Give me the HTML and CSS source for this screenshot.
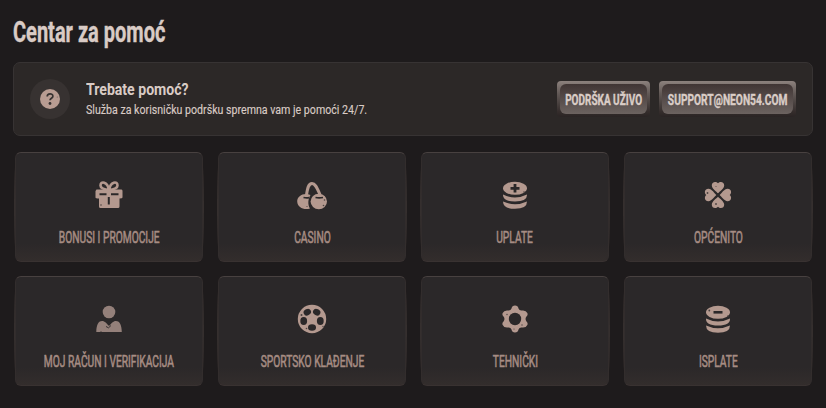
FILE: index.html
```html
<!DOCTYPE html>
<html lang="hr">
<head>
    <meta charset="UTF-8">
    <meta name="viewport" content="width=device-width, initial-scale=1.0">
    <title>Centar za pomoć</title>
    <link rel="stylesheet" href="styles.css">
</head>
<body>
    <main class="help">
        <h1><span class="narrow">Centar za pomoć</span></h1>

        <section class="contact">
            <div class="contact-icon">
                <svg width="20" height="20" viewBox="0 0 20 20">
                    <circle cx="10" cy="10" r="10" fill="#b89c92"/>
                    <path d="M7.2 7.6C7.2 3.9 12.9 4 12.9 7.2C12.9 9.2 10 9.2 10 11.3" fill="none" stroke="#373231" stroke-width="1.7"/>
                    <circle cx="10" cy="14.5" r="1.4" fill="#373231"/>
                    <circle cx="17.3" cy="8" r=".6" fill="#6f6260"/>
                </svg>
            </div>
            <div class="contact-text">
                <h2><span class="narrow">Trebate pomoć?</span></h2>
                <p><span class="narrow">Služba za korisničku podršku spremna vam je pomoći 24/7.</span></p>
            </div>
            <div class="contact-buttons">
                <button class="button button-live"><span class="button-face"><span class="narrow">PODRŠKA UŽIVO</span></span></button>
                <button class="button button-mail"><span class="button-face"><span class="narrow">SUPPORT@NEON54.COM</span></span></button>
            </div>
        </section>

        <nav class="topics">
            <a class="card">
                <svg class="icon" viewBox="0 0 32 32">
                    <path class="line" stroke-width="2.6" d="M16 11C12 10.5 7.500 9.500 7.500 6.500C7.500 1.500 14.500 2.500 16 11C17.500 2.500 24.500 1.500 24.500 6.500C24.500 9.500 20 10.500 16 11"/>
                    <path class="fill" d="M3.500 10.500H28.500Q29.500 10.500 29.500 12V18.500Q29.500 19.500 26.500 19.500V27.500Q26.500 29 25 29H7.500Q6 29 6 27.500V19.500Q2.500 19.500 2.500 18.500V12Z"/>
                    <path class="hole" stroke-width="2" d="M6.500 15.300H13.500M18 15.300H25.500M15.800 18V25.500"/>
                    <circle class="dot" cx="8" cy="26" r=".8"/>
                </svg>
                <span class="narrow">BONUSI I PROMOCIJE</span>
            </a>
            <a class="card">
                <svg class="icon" viewBox="0 0 32 32">
                    <path class="line" stroke-width="3" d="M10.500 16C11.500 9 12.500 4.500 16 4.500S21 9 24 15.500"/>
                    <path class="fill" d="M14.500 16C8 13 1 17 1.200 22.500C1.500 28.500 8 31.500 14 29.500C11.500 25.500 12 20 14.500 16Z"/>
                    <ellipse class="fill" cx="22.800" cy="22.500" rx="8.200" ry="7.700"/>
                    <path class="hole" stroke-width="1.700" d="M7.500 18.500Q10.500 19.200 13 18.700M19.500 18.500Q23 19.300 27 18.500"/>
                    <circle class="dot" cx="28.500" cy="21" r=".8"/>
                    <circle class="dot" cx="27.500" cy="26.500" r=".8"/>
                    <circle class="dot" cx="11" cy="27.500" r=".6"/>
                </svg>
                <span class="narrow">CASINO</span>
            </a>
            <a class="card">
                <svg class="icon" viewBox="0 0 32 32">
                    <ellipse class="fill" cx="16" cy="9.300" rx="12" ry="6.500"/>
                    <path class="fill" d="M4 15.500Q16 21.500 28 15.500Q28.500 22.500 16 22.500T4 15.500ZM4 22.500Q16 28 28 22.500Q28 29.800 16 29.800T4 22.500Z"/>
                    <path class="hole" stroke-width="2.800" d="M11.500 9.300H20.500M16 5V13.500"/>
                    <circle class="dot" cx="25" cy="13" r=".8"/>
                </svg>
                <span class="narrow">UPLATE</span>
            </a>
            <a class="card">
                <svg class="icon" viewBox="0 0 32 32">
                    <g class="fill">
                        <path id="leaf" d="M16 14.300C14.500 12.700 10 9.800 9.800 6.500C9.600 2.700 14 1.800 16 4.300C18 1.800 22.400 2.700 22.200 6.500C22 9.800 17.500 12.700 16 14.300Z"/>
                        <use href="#leaf" transform="rotate(90 16 16)"/>
                        <use href="#leaf" transform="rotate(180 16 16)"/>
                        <use href="#leaf" transform="rotate(270 16 16)"/>
                    </g>
                    <circle class="dot" cx="5.500" cy="14" r=".9"/>
                    <circle class="dot" cx="14" cy="25" r=".9"/>
                    <circle class="dot" cx="14" cy="7.500" r=".5"/>
                </svg>
                <span class="narrow">OPĆENITO</span>
            </a>
            <a class="card">
                <svg class="icon icon-user" viewBox="0 0 32 32">
                    <circle class="fill" cx="16" cy="9" r="6.300"/>
                    <path class="fill" d="M3.300 29C3.300 21 6 18 9 18C12 18 13.500 20.500 16 23C18.500 20.500 20 18 23 18C26 18 28.800 21 28.800 29Z"/>
                    <path class="hole" stroke-width=".9" d="M13 23.500L15.500 24.800L18 22.500"/>
                    <circle class="dot" cx="8" cy="28.500" r=".6"/>
                </svg>
                <span class="narrow">MOJ RAČUN I VERIFIKACIJA</span>
            </a>
            <a class="card">
                <svg class="icon" viewBox="0 0 32 32">
                    <circle class="fill" cx="16" cy="16" r="14.200"/>
                    <g class="spot">
                        <ellipse cx="11.300" cy="9.200" rx="3.800" ry="3.200" transform="rotate(-25 11.300 9.200)"/>
                        <ellipse cx="20.700" cy="9.200" rx="3.800" ry="3.200" transform="rotate(25 20.700 9.200)"/>
                        <ellipse cx="24.300" cy="18" rx="3.400" ry="3.900"/>
                        <ellipse cx="16" cy="24.500" rx="4" ry="3.300"/>
                        <ellipse cx="7.700" cy="18" rx="3.400" ry="3.900"/>
                    </g>
                    <circle class="dot" cx="5.500" cy="12" r="1"/>
                    <circle class="dot" cx="10.500" cy="25.500" r=".8"/>
                    <circle class="dot" cx="27" cy="23.500" r=".7"/>
                </svg>
                <span class="narrow">SPORTSKO KLAĐENJE</span>
            </a>
            <a class="card">
                <svg class="icon" viewBox="0 0 32 32">
                    <path class="gear" d="M12.500 5.500Q13 2.500 16 2.500Q19 2.500 19.500 5.500Q20.500 8 23 7.500Q27 7 28.300 10Q29.300 12 27.300 13.800Q25.800 16 27.300 18.200Q29.300 20 28.300 22Q27 25 23 24.500Q20.500 24 19.500 26.500Q19 29.500 16 29.500Q13 29.500 12.500 26.500Q11.500 24 9 24.500Q5 25 3.700 22Q2.700 20 4.700 18.200Q6.200 16 4.700 13.800Q2.700 12 3.700 10Q5 7 9 7.500Q11.500 8 12.500 5.500Z"/>
                    <circle class="spot" cx="16" cy="16" r="6.200"/>
                    <circle class="dot" cx="8" cy="11.500" r=".7"/>
                    <circle class="dot" cx="23" cy="22" r=".7"/>
                    <circle class="dot" cx="15" cy="26" r=".6"/>
                </svg>
                <span class="narrow">TEHNIČKI</span>
            </a>
            <a class="card">
                <svg class="icon" viewBox="0 0 32 32">
                    <ellipse class="fill" cx="16" cy="9.300" rx="12" ry="6.500"/>
                    <path class="fill" d="M4 15.500Q16 21.500 28 15.500Q28.500 22.500 16 22.500T4 15.500ZM4 22.500Q16 28 28 22.500Q28 29.800 16 29.800T4 22.500Z"/>
                    <path class="hole" stroke-width="2.600" d="M11.500 9.300H20.500"/>
                    <circle class="dot" cx="7.300" cy="7.500" r=".9"/>
                    <circle class="dot" cx="26" cy="13" r=".8"/>
                </svg>
                <span class="narrow">ISPLATE</span>
            </a>
        </nav>
    </main>
</body>
</html>
```
FILE: styles.css
```css
* {
    box-sizing: border-box;
}

body {
    margin: 0;
    background-color: #1e1b1c;
    font-family: 'Roboto', sans-serif;
    color: #d9cbc5;
}

.help {
    width: 826px;
    height: 408px;
    padding: 14px 13px 0;
    overflow: hidden;
}

.narrow {
    display: inline-block;
    white-space: nowrap;
}

h1 {
    height: 36px;
    margin: 0 0 12px;
    font-size: 29px;
    line-height: 36px;
    font-weight: 700;
}

h1 .narrow {
    transform: scaleX(0.69);
    transform-origin: left;
    -webkit-text-stroke: 0.4px;
}

.contact {
    display: flex;
    align-items: center;
    height: 74px;
    padding: 0 16px;
    background-color: #2c2827;
    border: 1px solid #373333;
    border-radius: 7px;
}

.contact-icon {
    display: flex;
    align-items: center;
    justify-content: center;
    width: 40px;
    height: 40px;
    margin-right: 16px;
    border-radius: 50%;
    background-color: #373231;
}

.contact-text {
    width: 470px;
}

h2 {
    margin: 0;
    font-size: 16px;
    line-height: 21px;
    font-weight: 700;
}

h2 .narrow {
    transform: scaleX(0.88);
    transform-origin: left;
}

p {
    margin: 0;
    font-size: 12.5px;
    line-height: 20px;
}

p .narrow {
    transform: scaleX(0.85);
    transform-origin: left;
    -webkit-text-stroke: 0.15px;
}

.contact-buttons {
    display: flex;
    gap: 9px;
    margin-left: auto;
}

.button {
    display: flex;
    height: 36px;
    padding: 3px;
    border: 0;
    border-radius: 4px;
    background: linear-gradient(#8c817d, #625956 35%, #352d2c 85%, #2a2424);
    font-family: inherit;
}

.button-face {
    display: flex;
    align-items: center;
    justify-content: center;
    width: 100%;
    height: 30px;
    padding-top: 2px;
    border-radius: 6px;
    background: linear-gradient(#403534, #6c6360);
    font-size: 15.5px;
    font-weight: 700;
    color: #dacdc7;
}

.button-live {
    width: 93px;
}

.button-mail {
    width: 137px;
}

.button .narrow {
    transform: scaleX(0.66);
    -webkit-text-stroke: 0.4px;
}

.button-live .narrow {
    transform: scaleX(0.645);
}

.topics {
    display: grid;
    grid-template-columns: repeat(4, 188px);
    gap: 14px 15px;
    margin: 16px 0 0 2px;
}

.card {
    position: relative;
    display: flex;
    flex-direction: column;
    align-items: center;
    height: 110px;
    padding-top: 26px;
    border: 1px solid #322d2d;
    border-top-color: #484140;
    border-bottom-color: #393231;
    border-radius: 6px;
    background: linear-gradient(#2b2829 84%, #332d2c);
    color: #a68c83;
    font-size: 16.5px;
    line-height: 20px;
}

/* slightly bulging left and right edges */
.card::before {
    content: "";
    position: absolute;
    inset: 8px -2px;
    border: solid #352f2e;
    border-width: 0 1px;
    border-radius: 2px / 45px;
}

.icon {
    flex: none;
    width: 32px;
    height: 32px;
    margin-bottom: 17px;
}

.fill,
.gear {
    fill: #b4998f;
}

.icon-user .fill {
    fill: #94807a;
}

.line {
    fill: none;
    stroke: #b4998f;
}

.hole {
    fill: none;
    stroke: #2b2829;
}

.spot {
    fill: #2b2829;
}

.dot {
    fill: #4b4240;
}

.card .narrow {
    transform: scaleX(0.62);
    -webkit-text-stroke: 0.6px;
}
```
